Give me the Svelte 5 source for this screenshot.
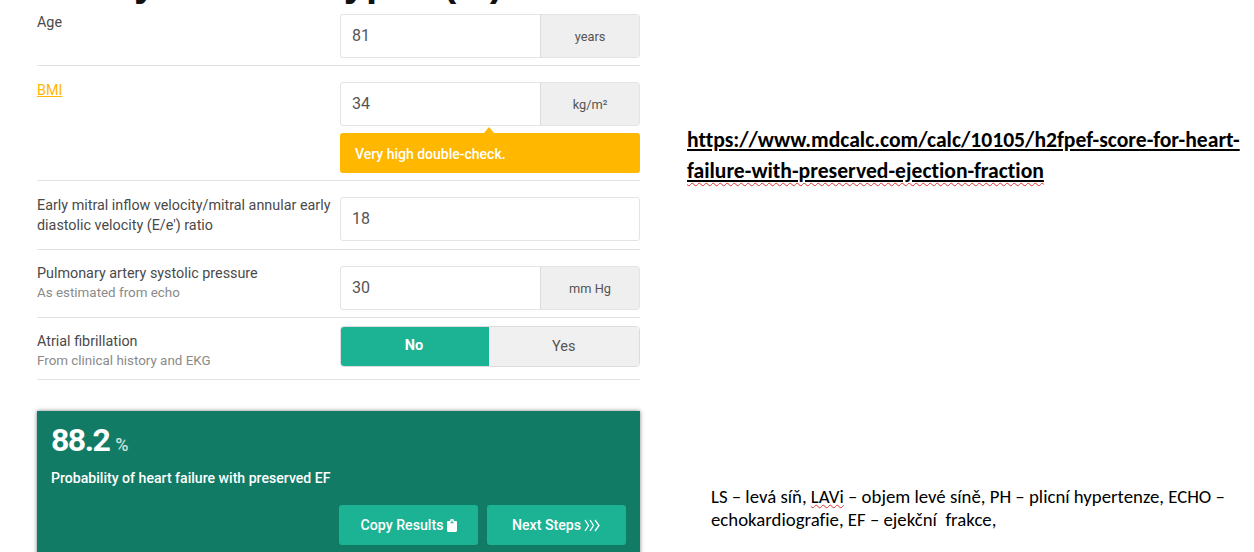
<script>
  const rows = [
    { label: 'Age', value: '81', unit: 'years', cls: 'r-age' },
    { label: 'BMI', value: '34', unit: 'kg/m²', warn: 'Very high double-check.', cls: 'r-bmi', link: true },
    { label: "Early mitral inflow velocity/mitral annular early diastolic velocity (E/e') ratio", value: '18', cls: 'r-ee' },
    { label: 'Pulmonary artery systolic pressure', hint: 'As estimated from echo', value: '30', unit: 'mm Hg', cls: 'r-pa' }
  ];
</script>

<div class="page">
  <div class="calc">
    <div class="clip">
      <div class="cut">Hodnoty skóre a typ a (i/i)</div>
    </div>
    <div class="rows">
      {#each rows as r}
        <div class="row {r.cls}">
          <div class="label">
            {#if r.link}<a href="#bmi" class="warnlink">{r.label}</a>{:else}<div>{r.label}</div>{/if}
            {#if r.hint}<div class="hint">{r.hint}</div>{/if}
          </div>
          <div class="ctl">
            <div class="field">
              <div class="value">{r.value}</div>
              {#if r.unit}<div class="unit">{r.unit}</div>{/if}
            </div>
            {#if r.warn}
              <div class="warn"><span class="arrow"></span>{r.warn}</div>
            {/if}
          </div>
        </div>
      {/each}
      <div class="row r-af">
        <div class="label">
          <div>Atrial fibrillation</div>
          <div class="hint">From clinical history and EKG</div>
        </div>
        <div class="ctl">
          <div class="toggle">
            <div class="on">No</div>
            <div class="off">Yes</div>
          </div>
        </div>
      </div>
    </div>

    <div class="result">
      <div class="score"><span class="num">88.2</span><span class="pct">%</span></div>
      <div class="desc">Probability of heart failure with preserved EF</div>
      <div class="actions">
        <div class="btn">Copy Results
          <svg width="10" height="13" viewBox="0 0 10 13" aria-hidden="true">
            <path fill="#fff" fill-rule="evenodd" d="M1.200 2H3.200V1.200C3.200.5 3.800 0 4.500 0h1c.7 0 1.300.5 1.300 1.200V2h2C9.500 2 10 2.500 10 3.200v8.600c0 .7-.5 1.200-1.200 1.200H1.200C.5 13 0 12.500 0 11.800V3.200C0 2.500.5 2 1.200 2ZM3.500 3.200v1h3v-1h-1V1.600h-1V3.200Z"/>
          </svg>
        </div>
        <div class="btn">Next Steps
          <svg width="17" height="13" viewBox="0 0 17 13" aria-hidden="true">
            <path fill="none" stroke="#fff" stroke-width="1.300" d="M1 1l3.500 5.500L1 12M6 1l3.500 5.500L6 12M11 1l4 5.500L11 12"/>
          </svg>
        </div>
      </div>
    </div>
  </div>

  <div class="notes">
    <div class="url">https://www.mdcalc.com/calc/10105/h2fpef-score-for-heart-<br /><span class="squiggle">failure-with-preserved-ejection-fraction</span></div>
    <div class="abbr">LS – levá síň, <span class="thin">LAVi</span> – objem levé síně, PH – plicní hypertenze, ECHO – echokardiografie, EF – ejekční&nbsp; frakce,</div>
  </div>
</div>

<style>
  :global(body) { margin: 0; background: #fff; }
  .page {
    width: 1254px;
    height: 552px;
    overflow: hidden;
    display: flex;
    font-family: "Roboto", "Lato", sans-serif;
  }
  .calc { width: 603px; margin-left: 37px; flex: none; }
  .clip { height: 6px; margin-left: -37px; overflow: hidden; }
  .cut {
    font: 700 40px/40px "Liberation Sans", sans-serif;
    word-spacing: 4px;
    color: #111;
    margin: -38px 0 0 -6px;
    white-space: nowrap;
  }
  .row {
    display: flex;
    border-bottom: 1.500px solid #e2e2e2;
    box-sizing: border-box;
  }
  .r-age { padding-top: 8px; height: 60px; }
  .r-bmi { height: 115px; padding-top: 16px; }
  .r-ee { height: 69px; padding-top: 16px; }
  .r-pa { height: 68px; padding-top: 16px; }
  .r-af { height: 62px; padding-top: 8px; }
  .label {
    width: 303px;
    flex: none;
    font-size: 14.350px;
    line-height: 19px;
    color: #4a4a4a;
  }
  .hint { color: #8a8a8a; font-size: 13.400px; }
  .warnlink { color: #ffb700; text-decoration: underline; }
  .r-age .label { margin-top: -1px; }
  .r-ee .label { line-height: 20px; margin-top: -1px; }
  .r-pa .label { margin-top: -2px; }
  .r-af .label { margin-top: 6px; }
  .r-bmi .label { margin-top: -1px; }
  .ctl { width: 300px; flex: none; }
  .field {
    display: flex;
    height: 43.500px;
    box-sizing: border-box;
    border: 1.500px solid #e4e4e4;
    border-radius: 3px;
    overflow: hidden;
    background: #fff;
  }
  .value {
    flex: 1;
    padding-left: 11px;
    font-size: 16px;
    line-height: 41px;
    color: #555;
  }
  .unit {
    width: 98px;
    background: #efefef;
    border-left: 1.500px solid #dcdcdc;
    text-align: center;
    font-size: 12.800px;
    line-height: 43px;
    color: #555;
  }
  .warn {
    position: relative;
    margin-top: 7.500px;
    height: 40px;
    background: #ffb700;
    border-radius: 3px;
    color: #fff;
    font-weight: 500;
    font-size: 14px;
    line-height: 42px;
    padding-left: 15px;
  }
  .arrow {
    position: absolute;
    top: -6px;
    left: 144px;
    width: 0;
    height: 0;
    border: 5px solid transparent;
    border-top: 0;
    border-bottom: 6px solid #ffb700;
  }
  .toggle {
    display: flex;
    height: 41px;
    box-sizing: border-box;
    border: 1.500px solid #dcdcdc;
    border-radius: 4px;
    overflow: hidden;
    font-size: 14.500px;
    text-align: center;
    line-height: 39px;
  }
  .on { width: 149px; margin: -1.500px 0 -1.500px -1.500px; background: #1bb394; color: #fff; font-weight: 700; }
  .off { flex: 1; background: #f0f0f0; color: #555; }
  .result {
    margin-top: 31px;
    height: 160px;
    background: #127b65;
    box-shadow: 0 0 4px rgba(0, 0, 0, 0.5);
    box-sizing: border-box;
    padding: 11px 14px 0;
    color: #fff;
  }
  .score { display: flex; align-items: baseline; height: 37px; }
  .num { font-size: 32px; font-weight: 700; line-height: 37px; letter-spacing: -1.500px; }
  .pct { font-size: 18px; font-weight: 500; margin-left: 6px; color: #c9e2db; }
  .desc { margin-top: 9px; font-size: 14.100px; font-weight: 500; line-height: 20px; }
  .actions { display: flex; justify-content: flex-end; gap: 9px; margin-top: 17px; }
  .btn {
    width: 139px;
    height: 40px;
    background: #1bb394;
    border-radius: 3px;
    display: flex;
    align-items: center;
    justify-content: center;
    gap: 3px;
    font-size: 14.200px;
    font-weight: 500;
  }
  .notes {
    flex: 1;
    min-width: 0;
    padding: 124px 0 0 47px;
    color: #000;
    font-family: "Carlito", "Lato", sans-serif;
    font-variant-ligatures: none;
  }
  .url {
    font-size: 21.650px;
    font-weight: 700;
    line-height: 31px;
    text-decoration: underline;
    white-space: nowrap;
  }
  .squiggle { text-decoration: underline wavy #d33 1px; text-underline-offset: 4px; }
  .abbr {
    margin: 300px 0 0 24px;
    width: 530px;
    font-size: 18.800px;
    line-height: 22.500px;
  }
  .thin { text-decoration: underline wavy #d33 1px; }
</style>
